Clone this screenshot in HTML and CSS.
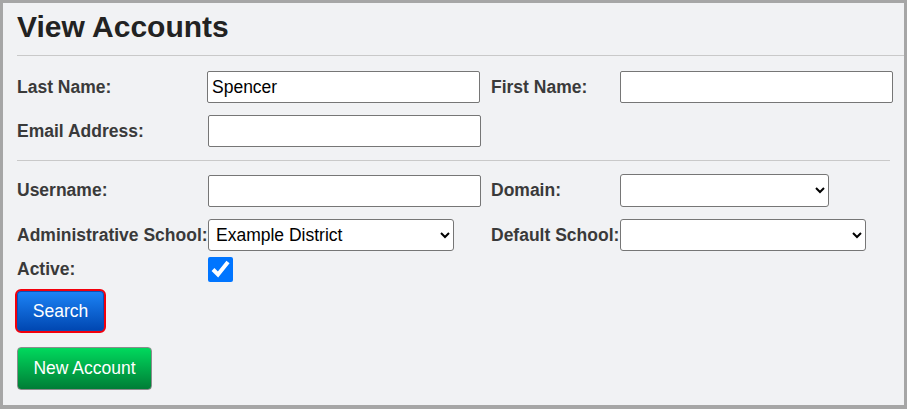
FILE: index.html
```html
<!DOCTYPE html>
<html lang="en">
<head>
<meta charset="utf-8">
<title>View Accounts</title>
<link rel="stylesheet" href="styles.css">
</head>
<body>
<div class="frame">
  <h1 class="title">View Accounts</h1>
  <hr class="rule rule-top">
  <form class="form">
    <div class="row">
      <label class="lbl">Last Name:</label>
      <input class="field" type="text" value="Spencer">
      <label class="lbl">First Name:</label>
      <input class="field" type="text">
    </div>
    <div class="row row-gap">
      <label class="lbl">Email Address:</label>
      <input class="field field-shift" type="text">
    </div>
    <hr class="rule rule-mid">
    <div class="row row-tall">
      <label class="lbl">Username:</label>
      <input class="field field-shift" type="text">
      <label class="lbl">Domain:</label>
      <select class="sel sel-domain"><option></option></select>
    </div>
    <div class="row row-gap">
      <label class="lbl">Administrative School:</label>
      <select class="sel sel-school"><option>Example District</option></select>
      <label class="lbl">Default School:</label>
      <select class="sel sel-school"><option></option></select>
    </div>
    <div class="row row-check">
      <label class="lbl">Active:</label>
      <input class="check" type="checkbox" checked>
    </div>
    <div class="actions">
      <button type="button" class="btn btn-search">Search</button>
      <button type="button" class="btn btn-new">New Account</button>
    </div>
  </form>
</div>
</body>
</html>
```

FILE: styles.css
```css
html, body {
  margin: 0;
  padding: 0;
}
body {
  font-family: "Liberation Sans", Arial, sans-serif;
  background: #f1f2f4;
}
.frame {
  box-sizing: border-box;
  width: 907px;
  height: 409px;
  border: 3px solid #a6a6a6;
  border-bottom-width: 4px;
  background: #f1f2f4;
  padding-left: 14px;
  overflow: hidden;
}
.title {
  margin: 6px 0 0 0;
  font-size: 30px;
  line-height: 36px;
  font-weight: bold;
  color: #222;
}
.rule {
  border: 0;
  border-top: 1px solid #c9c9c9;
  margin: 0;
  height: 0;
}
.rule-top {
  margin-top: 10px;
}
.rule-mid {
  margin-top: 13px;
  margin-right: 14px;
}
.form {
  display: flex;
  flex-direction: column;
  margin: 0;
}
.row {
  display: grid;
  grid-template-columns: 190px 273px 11px 129px auto;
  align-items: center;
  height: 32px;
}
.row:first-child {
  margin-top: 15px;
}
.row > .lbl:nth-of-type(2) {
  grid-column: 4;
}
.row-gap {
  margin-top: 12px;
}
.row-tall {
  margin-top: 13px;
  height: 33px;
}
.row-check {
  margin-top: 6px;
  height: 25px;
}
.lbl {
  font-size: 17.5px;
  font-weight: bold;
  color: #3a3a3a;
  white-space: nowrap;
}
.field {
  box-sizing: border-box;
  width: 273px;
  height: 32px;
  margin: 0;
  padding: 0 4px;
  border: 1px solid #767676;
  border-radius: 2px;
  background: #fff;
  font-family: "Liberation Sans", Arial, sans-serif;
  font-size: 17.5px;
  color: #000;
}
.field-shift {
  margin-left: 1px;
}
.row > .field:nth-of-type(2) {
  grid-column: 5;
}
.sel {
  box-sizing: border-box;
  height: 33px;
  margin: 0;
  padding: 0 3px;
  border: 1px solid #767676;
  border-radius: 3px;
  background-color: #fff;
  font-family: "Liberation Sans", Arial, sans-serif;
  font-size: 17.5px;
  color: #000;
}
.sel-domain {
  width: 209px;
  grid-column: 5;
}
.sel-school {
  width: 246px;
  height: 32px;
  margin-left: 1px;
}
.row > .sel-school:nth-of-type(2) {
  grid-column: 5;
  margin-left: 0;
}
.check {
  width: 25px;
  height: 25px;
  margin: 0 0 0 1px;
  accent-color: #0075ff;
  grid-column: 2;
}
.actions {
  display: flex;
  flex-direction: column;
  align-items: flex-start;
  margin-top: 7px;
}
.btn {
  font-family: "Liberation Sans", Arial, sans-serif;
  font-size: 17.5px;
  color: #fff;
  cursor: pointer;
  box-sizing: border-box;
}
.btn-search {
  margin-left: -2px;
  width: 91px;
  height: 44px;
  padding: 0;
  border: 2px solid #f2000c;
  border-radius: 6px;
  background: linear-gradient(#1c84f7, #0046b0);
  box-shadow: inset 0 0 0 1px #0a4fb8;
}
.btn-new {
  margin-top: 14px;
  width: 135px;
  height: 43px;
  padding: 0;
  border: 1px solid #8c8c8c;
  border-radius: 4px;
  background: linear-gradient(#00d95d, #007d36);
}
```
